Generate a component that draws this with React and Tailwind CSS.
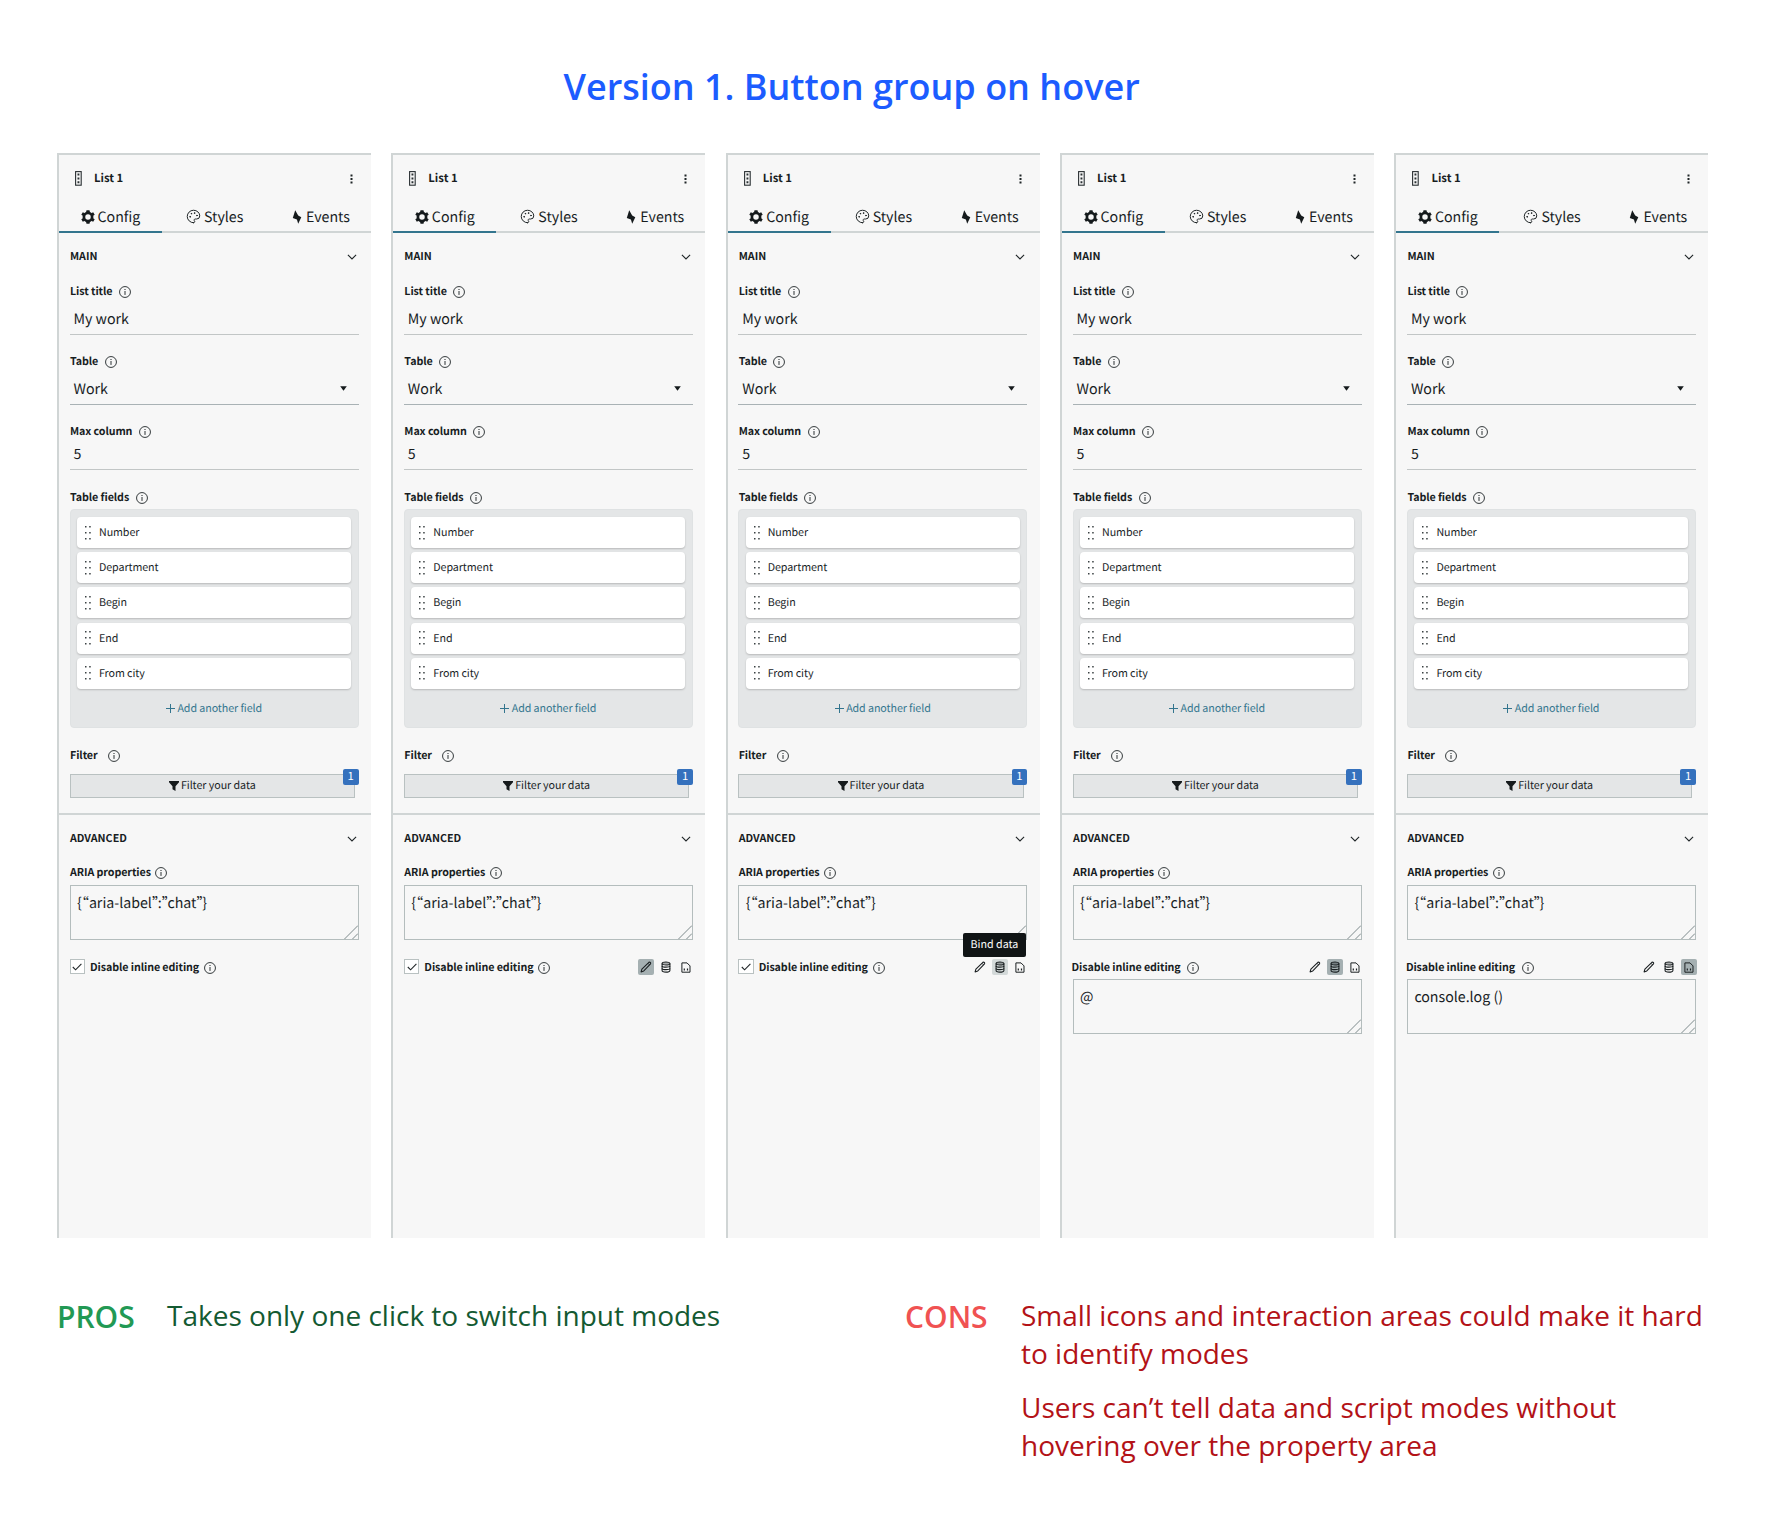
import React from "react";
import { Palette } from "lucide-react";

const FIELDS = ["Number", "Department", "Begin", "End", "From city"];

const PANELS = [
  { id: 1, checkbox: true },
  { id: 2, checkbox: true, modes: true, active: "edit" },
  { id: 3, checkbox: true, modes: true, hover: "data", tooltip: "Bind data" },
  { id: 4, modes: true, active: "data", value: "@" },
  { id: 5, modes: true, active: "script", value: "console.log ()" },
];

function InfoIcon({ className }) {
  return (
    <svg viewBox="0 0 12 12" className={`size-3 shrink-0 ${className}`} fill="none" stroke="#2a3033">
      <circle cx="6" cy="6" r="5.45" strokeWidth="0.95" />
      <path d="M6 5v3.9" strokeWidth="1" />
      <path d="M6 3v1.1" strokeWidth="1.1" />
    </svg>
  );
}

function Chevron() {
  return (
    <svg viewBox="0 0 10 6" className="mr-[2px] h-[6px] w-[10px]" fill="none" stroke="#1f2527" strokeWidth="1.1">
      <path d="M0.9 0.8 5 4.9 9.1 0.8" />
    </svg>
  );
}

function GearIcon() {
  return (
    <svg viewBox="0 0 14 14" className="size-[14px]" fill="none" stroke="#151a1c">
      <circle cx="7" cy="7" r="4.1" strokeWidth="2.7" />
      <path
        d="M5.5 0.2h3L9 2.4H5ZM5.5 13.8h3L9 11.6H5ZM0.3 4.8 1.8 2.3 3.9 3.3 2.2 6.1ZM12.2 2.3 13.7 4.8 11.8 6.1 10.1 3.3ZM0.3 9.2 1.8 11.7 3.9 10.7 2.2 7.9ZM12.2 11.7 13.7 9.2 11.8 7.9 10.1 10.7Z"
        fill="#151a1c"
        stroke="none"
      />
    </svg>
  );
}

function BoltIcon() {
  return (
    <svg viewBox="0 0 10 14" className="h-[14px] w-[10px]" fill="#151a1c">
      <path d="M3.2 0.2 6.2 5.4 9.3 7.2 6.2 13.7 4.9 9.6 0.8 8Z" />
    </svg>
  );
}

function ListIcon() {
  return (
    <svg viewBox="0 0 7 15" className="h-[15px] w-[7px]">
      <rect x="0.6" y="0.6" width="5.6" height="13.6" fill="none" stroke="#2a3033" strokeWidth="1.1" />
      <path d="M2.5 2.6h1.9v2H2.5zM2.5 6.4h1.9v2H2.5zM2.5 10.2h1.9v2H2.5z" fill="#2a3033" />
    </svg>
  );
}

function PencilIcon() {
  return (
    <svg viewBox="0 0 12 12" className="size-3" fill="none" stroke="#1b2022" strokeWidth="1.1" strokeLinejoin="round">
      <path d="M1.1 10.9 1.9 8.1 8.9 1.3Q9.6 0.8 10.3 1.5 11 2.2 10.5 2.9L3.8 9.9Z" />
      <path d="M8 2.3 9.7 4" strokeWidth="0.8" />
    </svg>
  );
}

function DataIcon() {
  return (
    <svg viewBox="0 0 10 12" className="h-3 w-[10px]" fill="none" stroke="#1b2022" strokeWidth="1.1">
      <ellipse cx="5" cy="2.5" rx="3.9" ry="1.5" fill="#1b2022" fillOpacity="0.35" />
      <path d="M1.1 2.5v7c0 .9 1.7 1.6 3.9 1.6s3.9-.7 3.9-1.6v-7" />
      <path d="M1.1 4.9c0 .7 1.7 1.2 3.9 1.2s3.9-.5 3.9-1.2M1.1 7.4c0 .7 1.7 1.2 3.9 1.2s3.9-.5 3.9-1.2" />
    </svg>
  );
}

function ScriptIcon() {
  return (
    <svg viewBox="0 0 10 11" className="h-[11px] w-[10px]" fill="none" stroke="#1b2022" strokeWidth="1">
      <path d="M0.9 0.9H6L9 3.9V10.2H0.9Z" />
      <path d="M3.3 6.6v1.8M6.5 6.6v1.8" strokeWidth="1.2" />
    </svg>
  );
}

const MODE_ICONS = [
  ["edit", PencilIcon],
  ["data", DataIcon],
  ["script", ScriptIcon],
];

function modeBackground(panel, mode) {
  if (panel.active === mode) return "bg-[#a5b0b2]";
  if (panel.hover === mode) return "bg-[#d3d9d9]";
  return "";
}

function Label({ children, gap = "ml-[6.5px]", inset = "pl-[0.5px]" }) {
  return (
    <div className={`flex h-[21px] items-center ${inset}`}>
      <span className="pt-[2px] text-[10.7px] leading-none font-bold tracking-[-0.08px] whitespace-nowrap">{children}</span>
      <InfoIcon className={gap} />
    </div>
  );
}

function SectionHeader({ children, height = "h-12" }) {
  return (
    <div className={`flex items-center justify-between pl-[0.5px] ${height}`}>
      <span className="pt-px text-[10.7px] leading-none font-bold">{children}</span>
      <Chevron />
    </div>
  );
}

function TextArea({ children }) {
  return (
    <div className="relative h-[55px] border border-[#b4bdbd] pt-[5.5px] pl-[6.5px]">
      <span className="block text-[14.2px] leading-[22px]">{children}</span>
      <svg viewBox="0 0 14 14" className="absolute right-0 bottom-0 size-[14px]" fill="none" stroke="#7d898b" strokeWidth="1">
        <path d="M0.5 14 14 0.5M8.5 14 14 8.5" />
      </svg>
    </div>
  );
}

/* The CJK face sets closing quotes full width; tight tracking brings them to a Latin advance. */
function Quote() {
  return <span className="inline-block w-[5.8px] tracking-[-8.4px] whitespace-nowrap">”</span>;
}

function Tab({ icon, label, className }) {
  return (
    <div className={`flex h-[31px] items-center border-b-2 ${className}`}>
      {icon}
      <span className="pt-px text-[14.2px] leading-none">{label}</span>
    </div>
  );
}

function Panel({ panel }) {
  return (
    <section className="h-[1085px] w-[314px] shrink-0 border-t-2 border-l-2 border-[#d0d5d5] bg-[#f7f7f7] font-['Noto_Sans_CJK_SC','Noto_Sans',sans-serif] text-[#181d1f] [text-rendering:geometricPrecision]">
      <div className="flex h-[47px] items-center pr-[18px] pl-4">
        <ListIcon />
        <span className="ml-3 grow text-[11.3px] leading-none font-bold">List 1</span>
        <svg viewBox="0 0 3 10" className="h-[10px] w-[3px]" fill="#1f2527">
          <path d="M0.5 0.5h2v2h-2zM0.5 4h2v2h-2zM0.5 7.5h2v2h-2z" />
        </svg>
      </div>

      <div className="flex">
        <Tab className="w-[103px] gap-[3px] border-[#33758e] pl-[21.5px]" icon={<GearIcon />} label="Config" />
        <Tab
          className="w-[105px] gap-[3px] border-[#d0d5d5] pl-[24px]"
          icon={<Palette className="size-[15px]" strokeWidth={1.6} color="#1f2527" />}
          label="Styles"
        />
        <Tab className="grow gap-1 border-[#d0d5d5] pl-[25px]" icon={<BoltIcon />} label="Events" />
      </div>

      <div className="mr-[12.5px] ml-[10.5px]">
        <SectionHeader>MAIN</SectionHeader>

        <Label>List title</Label>
        <div className="flex h-[33px] items-center border-b border-[#c2c6c6] pt-[2px] pl-[4px] text-[14.2px] leading-none">
          My work
        </div>

        <div className="mt-[16px]">
          <Label>Table</Label>
          <div className="flex h-[33px] items-center justify-between border-b border-[#a9b2b5] pt-[2px] pr-3 pl-[4px] text-[14.2px] leading-none">
            Work
            <svg viewBox="0 0 7 5" className="mb-px h-[5px] w-[7px]" fill="#151a1c">
              <path d="M0.2 0.3h6.6L3.5 4.8Z" />
            </svg>
          </div>
        </div>

        <div className="mt-[16px]">
          <Label>Max column</Label>
          <div className="flex h-[28px] items-center border-b border-[#c2c6c6] pb-[2px] pl-[4px] text-[14.2px] leading-none">5</div>
        </div>

        <div className="mt-[17px]">
          <Label>Table fields</Label>
          <div className="mt-px h-[219px] rounded-[4px] border border-[#dfe2e3] bg-[#e4e6e7] px-[6.5px] pt-[7px]">
            <div className="flex flex-col gap-[4.2px]">
              {FIELDS.map((field) => (
                <div key={field} className="flex h-[31px] items-center rounded-[4px] bg-white pl-2 shadow-[0_1px_2px_rgba(0,0,0,0.2)]">
                  <svg viewBox="0 0 6 14" className="h-[14px] w-[6px]" fill="#3a4143">
                    <path d="M0 0h1.5v1.5H0zM4.2 0h1.5v1.5H4.2zM0 6h1.5v1.5H0zM4.2 6h1.5v1.5H4.2zM0 12h1.5v1.5H0zM4.2 12h1.5v1.5H4.2z" />
                  </svg>
                  <span className="ml-2 pt-[1.6px] text-[10.7px] leading-none tracking-[-0.08px]">{field}</span>
                </div>
              ))}
            </div>
            <div className="flex h-[39px] items-center justify-center gap-[2.5px] text-[#33758e]">
              <svg viewBox="0 0 9 9" className="size-[9px]" fill="none" stroke="currentColor" strokeWidth="1">
                <path d="M4.5 0v9M0 4.5h9" />
              </svg>
              <span className="pt-[1.6px] text-[10.7px] leading-none tracking-[-0.08px]">Add another field</span>
            </div>
          </div>
        </div>

        <div className="mt-[17px]">
          <Label gap="ml-[10.5px]">Filter</Label>
          <div className="relative mt-2 mr-[3.5px] flex h-6 items-center justify-center gap-[2px] border border-[#b9c1c1] bg-[#e4e6e7]">
            <svg viewBox="0 0 10 10" className="size-[10px]" fill="#151a1c">
              <path d="M0 0h10v1.3L6.5 5.2V10L3.5 8.2V5.2L0 1.3Z" />
            </svg>
            <span className="text-[10.7px] leading-none tracking-[-0.05px]">Filter your data</span>
            <span className="absolute -top-[6px] -right-[4.5px] flex h-4 w-[15.5px] items-center justify-center rounded-[2px] bg-[#3571bd] text-[11.3px] leading-none text-white">
              1
            </span>
          </div>
        </div>
      </div>

      <div className="mt-[15px] border-t-2 border-[#d0d5d5] pr-[12.5px] pl-[10.5px]">
        <SectionHeader height="h-[47px]">ADVANCED</SectionHeader>
        <Label gap="ml-[4.5px]">ARIA properties</Label>
        <div className="mt-[2px]">
          <TextArea>
            {"{“aria-label"}
            <Quote />:<Quote />
            {"chat"}
            <Quote />
            {"}"}
          </TextArea>
        </div>

        <div className="relative mt-[17px] flex h-[22px] items-start">
          {panel.checkbox && (
            <span className="mt-[2px] mr-[4.5px] flex h-[15px] w-[15.5px] items-center justify-center border border-[#b9c1c1] bg-white">
              <svg viewBox="0 0 10 8" className="h-2 w-[10px]" fill="none" stroke="#1f2527" strokeWidth="1.1">
                <path d="M0.8 4 3.6 6.8 9.4 0.8" />
              </svg>
            </span>
          )}
          <Label inset={panel.checkbox ? "pl-[0.5px]" : "-ml-px"} gap={panel.checkbox ? "ml-[5px]" : "ml-[6.5px]"}>
            Disable inline editing
          </Label>
          {panel.modes && (
            <div className="mt-[2px] -mr-px ml-auto flex gap-1">
              {MODE_ICONS.map(([mode, Icon]) => (
                <span key={mode} className={`flex size-4 items-center justify-center rounded-[2px] ${modeBackground(panel, mode)}`}>
                  <Icon />
                </span>
              ))}
            </div>
          )}
          {panel.tooltip && (
            <span className="absolute right-[1px] bottom-[22px] flex h-6 w-[63.5px] items-center justify-center rounded-[2px] bg-[#101415] text-[10.7px] leading-none text-white">
              {panel.tooltip}
            </span>
          )}
        </div>
        {panel.value && <TextArea>{panel.value}</TextArea>}
      </div>
    </section>
  );
}

export default function App() {
  return (
    <main className="h-[1515px] w-[1775px] overflow-hidden bg-white font-['Open_Sans','Noto_Sans',sans-serif]">
      <h1 className="pt-[62px] pl-[563.5px] text-[36px] leading-[49px] font-semibold whitespace-nowrap text-[#1c5cff]">
        Version 1. Button group on hover
      </h1>

      <div className="mt-[42px] ml-[57px] flex gap-[20.35px]">
        {PANELS.map((panel) => (
          <Panel key={panel.id} panel={panel} />
        ))}
      </div>

      <div className="mt-[58px] flex pl-[57px] text-[28px] leading-[38px]">
        <h2 className="w-[110px] text-[30px] leading-[41px] font-semibold text-[#229954]">PROS</h2>
        <p className="w-[738px] text-[#145a32]">Takes only one click to switch input modes</p>
        <h2 className="w-[116px] text-[30px] leading-[41px] font-semibold text-[#f05252]">CONS</h2>
        <div className="flex w-[700px] flex-col gap-4 text-[#b31217]">
          <p>
            Small icons and interaction areas could make it hard
            <br />
            to identify modes
          </p>
          <p>
            Users can’t tell data and script modes without
            <br />
            hovering over the property area
          </p>
        </div>
      </div>
    </main>
  );
}
